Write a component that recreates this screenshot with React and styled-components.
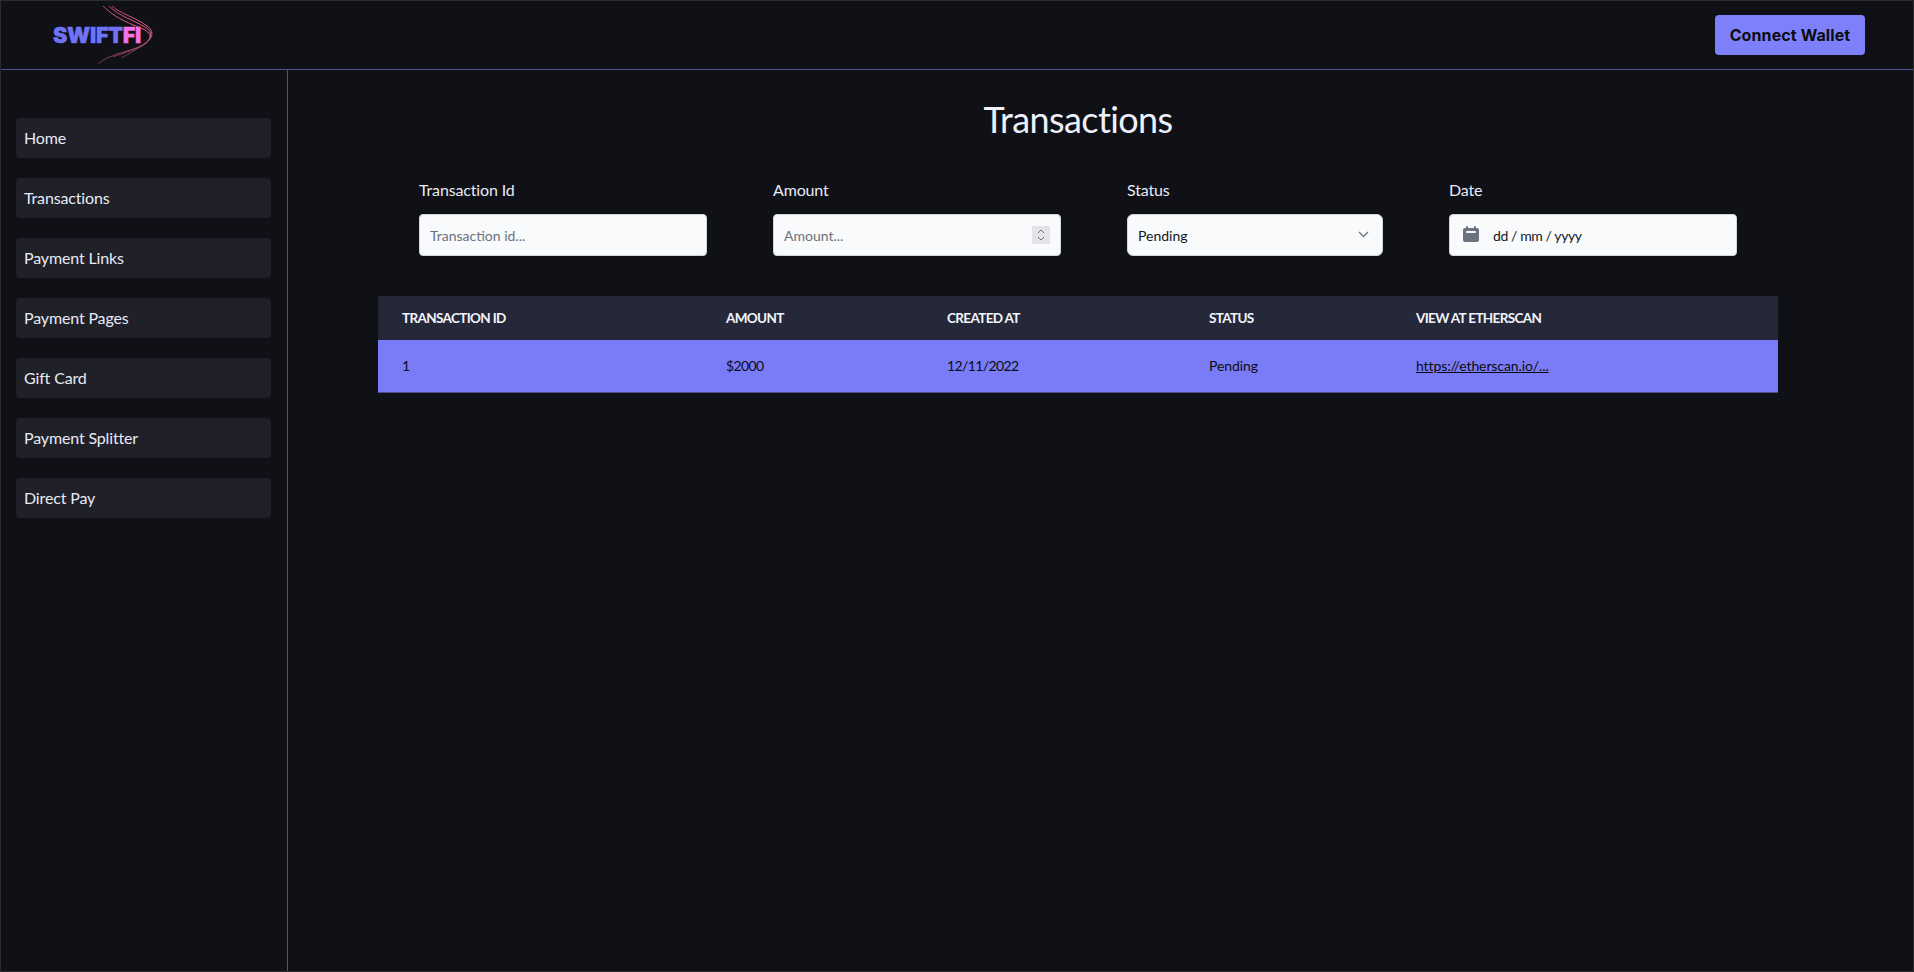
import React from 'react';
import styled, {createGlobalStyle} from 'styled-components';

const links = ['Home', 'Transactions', 'Payment Links', 'Payment Pages', 'Gift Card', 'Payment Splitter', 'Direct Pay'];

const columns = [
    {title: 'Transaction Id', width: 324},
    {title: 'Amount', width: 221},
    {title: 'Created At', width: 262},
    {title: 'Status', width: 207},
    {title: 'View at Etherscan', width: 386},
];

function Logo()
{
    return (
        <LogoWrap>
            <LogoText>SWIFT<LogoAccent>FI</LogoAccent></LogoText>
            <LogoSwoosh width="70" height="70" viewBox="0 0 70 70" fill="none">
                <defs>
                    <linearGradient id="swoosh" x1="0" y1="0" x2="0" y2="1">
                        <stop offset="0" stopColor="#b84a68" />
                        <stop offset="0.45" stopColor="#f0648e" />
                        <stop offset="1" stopColor="#6e3242" />
                    </linearGradient>
                </defs>
                <path d="M8 6C18 16 30 22 46 28C58 33 58 40 46 46C34 52 14 54 3 64" stroke="url(#swoosh)" strokeWidth="1" />
                <path d="M14 6C24 16 38 20 50 27C60 33 56 41 44 47C36 51 26 54 18 57" stroke="url(#swoosh)" strokeWidth="1" />
                <path d="M17 6C26 14 40 17 52 26C62 33 55 42 45 47C40 50 34 54 26 58" stroke="url(#swoosh)" strokeWidth="1" />
            </LogoSwoosh>
        </LogoWrap>
    );
}

function App()
{
    return (
        <Shell>
            <GlobalStyle />
            <Header>
                <Logo />
                <ConnectButton>Connect Wallet</ConnectButton>
            </Header>
            <Body>
                <Sidebar>
                    {links.map((link) => <SideLink key={link}>{link}</SideLink>)}
                </Sidebar>
                <Main>
                    <Title>Transactions</Title>
                    <Filters>
                        <Field $width={288}>
                            <Label>Transaction Id</Label>
                            <Control>
                                <Input placeholder="Transaction id..." />
                            </Control>
                        </Field>
                        <Field $width={288}>
                            <Label>Amount</Label>
                            <Control>
                                <Input placeholder="Amount..." />
                                <Spinner>
                                    <svg width="8" height="14" viewBox="0 0 8 14" fill="none" stroke="#74767c" strokeWidth="1">
                                        <path d="M1 5L4 2L7 5" />
                                        <path d="M1 9L4 12L7 9" />
                                    </svg>
                                </Spinner>
                            </Control>
                        </Field>
                        <Field $width={256}>
                            <Label>Status</Label>
                            <Control>
                                <Select defaultValue="Pending">
                                    <option>Pending</option>
                                    <option>Completed</option>
                                    <option>Failed</option>
                                </Select>
                                <Chevron width="11" height="7" viewBox="0 0 11 7" fill="none" stroke="#6b7280" strokeWidth="1.3">
                                    <path d="M1 1L5.5 5.5L10 1" />
                                </Chevron>
                            </Control>
                        </Field>
                        <Field $width={288}>
                            <Label>Date</Label>
                            <Control>
                                <CalendarIcon width="20" height="20" viewBox="0 0 20 20" fill="#6b7280">
                                    <path fillRule="evenodd" d="M6 2a1 1 0 0 0-1 1v1H4a2 2 0 0 0-2 2v10a2 2 0 0 0 2 2h12a2 2 0 0 0 2-2V6a2 2 0 0 0-2-2h-1V3a1 1 0 1 0-2 0v1H7V3a1 1 0 0 0-1-1zm0 5a1 1 0 0 0 0 2h8a1 1 0 1 0 0-2H6z" />
                                </CalendarIcon>
                                <DateInput placeholder="dd / mm / yyyy" />
                            </Control>
                        </Field>
                    </Filters>
                    <Table>
                        <thead>
                            <tr>
                                {columns.map((col) => <HeadCell key={col.title} $width={col.width}>{col.title}</HeadCell>)}
                            </tr>
                        </thead>
                        <tbody>
                            <Row>
                                <Cell>1</Cell>
                                <Cell $tight>$2000</Cell>
                                <Cell $tight>12/11/2022</Cell>
                                <Cell>Pending</Cell>
                                <Cell><ScanLink href="#">https://etherscan.io/...</ScanLink></Cell>
                            </Row>
                        </tbody>
                    </Table>
                </Main>
            </Body>
        </Shell>
    );
}

export default App;

const GlobalStyle = createGlobalStyle`
    html, body
    {
        margin: 0;
        height: 100%;
        background: #0f1116;
        font-family: "Lato", "Open Sans", sans-serif;
    }

    * { box-sizing: border-box; }
`

const Shell = styled.div`
    height: 100vh;
    display: flex;
    flex-direction: column;
    border: 1px solid #2b2c30;
    overflow: hidden;
`

const Header = styled.header`
    height: 69px;
    flex-shrink: 0;
    display: flex;
    align-items: center;
    justify-content: space-between;
    padding: 0 48px 0 52px;
    border-bottom: 1px solid #4f5196;
`

const LogoWrap = styled.div`
    position: relative;
    width: 100px;
    height: 40px;
    display: flex;
    align-items: center;
`

const LogoText = styled.span`
    font-family: "Inter", sans-serif;
    font-weight: 900;
    font-size: 21.5px;
    letter-spacing: -0.3px;
    color: #7073f6;
    -webkit-text-stroke: 0.4px currentColor;
`

const LogoAccent = styled.span`
    color: #f472ea;
`

const LogoSwoosh = styled.svg`
    position: absolute;
    left: 42px;
    top: -15px;
`

const ConnectButton = styled.button`
    width: 150px;
    height: 40px;
    border: 0;
    border-radius: 4px;
    background: #7e80fb;
    color: #0b0c10;
    font-family: "Inter", sans-serif;
    font-size: 16px;
    font-weight: 700;
    letter-spacing: 0.1px;
    cursor: pointer;
`

const Body = styled.div`
    flex: 1;
    display: flex;
    min-height: 0;
`

const Sidebar = styled.nav`
    width: 287px;
    flex-shrink: 0;
    display: flex;
    flex-direction: column;
    gap: 20px;
    padding: 48px 16px 0 15px;
    border-right: 1px solid #4f5196;
`

const SideLink = styled.a`
    height: 40px;
    display: flex;
    align-items: center;
    padding: 0 8px 2px;
    border-radius: 4px;
    background: #1f2028;
    color: #e8eaf6;
    font-size: 16px;
    letter-spacing: -0.15px;
`

const Main = styled.main`
    flex: 1;
    padding: 0 0 0 90px;
`

const Title = styled.h1`
    width: 1400px;
    margin: 25px 0 0;
    text-align: center;
    color: #eef0fb;
    font-size: 36px;
    font-weight: 400;
    line-height: 48px;
    letter-spacing: -0.6px;
`

const Filters = styled.div`
    display: flex;
    gap: 66px;
    margin: 35px 0 0 41px;
`

const Field = styled.div`
    width: ${(props) => props.$width}px;
`

const Label = styled.label`
    display: block;
    height: 24px;
    margin-bottom: 12px;
    color: #e8eaf6;
    font-size: 16px;
    line-height: 24px;
    letter-spacing: -0.15px;
`

const Control = styled.div`
    position: relative;
    height: 42px;
`

const Input = styled.input`
    width: 100%;
    height: 42px;
    padding: 0 10px;
    border: 1px solid #d1d5db;
    border-radius: 4px;
    background: #f9fafb;
    color: #111827;
    font-family: inherit;
    font-size: 14px;
    outline: none;

    &::placeholder
    {
        color: #6b7280;
        opacity: 1;
    }
`

const DateInput = styled(Input)`
    padding-left: 43px;
    letter-spacing: -0.4px;

    &::placeholder
    {
        color: #111827;
    }
`

const Select = styled.select`
    width: 100%;
    height: 42px;
    padding: 0 10px;
    appearance: none;
    border: 1px solid #d1d5db;
    border-radius: 6px;
    background: #f9fafb;
    color: #111827;
    font-family: inherit;
    font-size: 14px;
    outline: none;
`

const Spinner = styled.span`
    position: absolute;
    top: 12px;
    right: 11px;
    width: 18px;
    height: 18px;
    display: flex;
    align-items: center;
    justify-content: center;
    background: #e4e4e8;
    pointer-events: none;
`

const Chevron = styled.svg`
    position: absolute;
    top: 17px;
    right: 14px;
    pointer-events: none;
`

const CalendarIcon = styled.svg`
    position: absolute;
    top: 10px;
    left: 12px;
    pointer-events: none;
`

const Table = styled.table`
    width: 1400px;
    margin-top: 40px;
    border-collapse: collapse;
    table-layout: fixed;
    font-size: 14px;
`

const HeadCell = styled.th`
    width: ${(props) => props.$width}px;
    height: 44px;
    padding: 0 24px;
    background: #252839;
    color: #f3f4fb;
    font-size: 13.5px;
    font-weight: 700;
    letter-spacing: -0.65px;
    text-align: left;
    text-transform: uppercase;
`

const Row = styled.tr`
    background: #7a7cf7;
    border-bottom: 1px solid #4b4d85;
`

const Cell = styled.td`
    height: 52px;
    padding: 0 24px;
    color: #0b0c10;
    letter-spacing: ${(props) => (props.$tight ? '-0.6px' : '-0.1px')};
`

const ScanLink = styled.a`
    color: #0b0c10;
    text-decoration: underline;
`
